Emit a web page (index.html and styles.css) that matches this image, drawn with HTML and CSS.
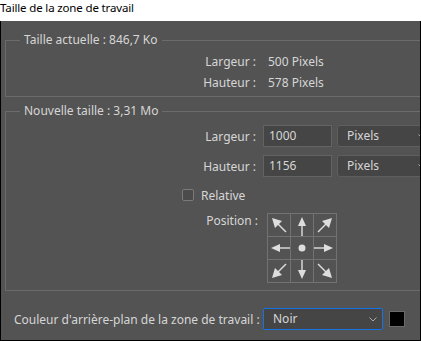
FILE: index.html
```html
<!DOCTYPE html>
<html lang="fr">
<head>
  <meta charset="UTF-8">
  <title>Taille de la zone de travail</title>
  <link rel="stylesheet" href="styles.css">
</head>
<body>
  <div class="window">
    <div class="titlebar">Taille de la zone de travail</div>
    <div class="frame">
      <fieldset class="group group-current">
        <legend>Taille actuelle : 846,7 Ko</legend>
        <div class="info">
          <span class="label">Largeur :</span><span class="value">500 Pixels</span>
          <span class="label">Hauteur :</span><span class="value">578 Pixels</span>
        </div>
      </fieldset>

      <fieldset class="group group-new">
        <legend>Nouvelle taille : 3,31 Mo</legend>
        <div class="form">
          <span class="label">Largeur :</span>
          <div class="fields">
            <div class="input">1000</div>
            <div class="select select-unit">Pixels
              <svg class="chevron" width="8" height="5" viewBox="0 0 8 5"><polyline points="0.5,0.5 4,4 7.5,0.5" fill="none" stroke="#a8a8a8" stroke-width="1"/></svg>
            </div>
          </div>

          <span class="label">Hauteur :</span>
          <div class="fields">
            <div class="input">1156</div>
            <div class="select select-unit">Pixels
              <svg class="chevron" width="8" height="5" viewBox="0 0 8 5"><polyline points="0.5,0.5 4,4 7.5,0.5" fill="none" stroke="#a8a8a8" stroke-width="1"/></svg>
            </div>
          </div>

          <div class="relative"><span class="checkbox"></span>Relative</div>

          <span class="label label-top">Position :</span>
          <div class="anchor">
            <svg width="71" height="71" viewBox="0 0 71 71">
              <g stroke="#727272" stroke-width="1" fill="none">
                <rect x="0.5" y="0.5" width="69" height="69"/>
                <line x1="23.5" y1="0" x2="23.5" y2="70"/>
                <line x1="46.5" y1="0" x2="46.5" y2="70"/>
                <line x1="0" y1="23.5" x2="70" y2="23.5"/>
                <line x1="0" y1="46.5" x2="70" y2="46.5"/>
              </g>
              <g fill="#dedede" stroke="#dedede" stroke-width="1.4">
                <line x1="35" y1="13" x2="35" y2="23"/>
                <polygon points="35,4 31,13 39,13" stroke="none"/>
                <line x1="35" y1="47" x2="35" y2="57"/>
                <polygon points="31,57 39,57 35,66" stroke="none"/>
                <line x1="13" y1="35" x2="23" y2="35"/>
                <polygon points="4,35 13,31 13,39" stroke="none"/>
                <line x1="47" y1="35" x2="57" y2="35"/>
                <polygon points="57,31 57,39 66,35" stroke="none"/>
                <circle cx="35" cy="35" r="3.5" stroke="none"/>
                <line x1="11" y1="11" x2="19" y2="19"/>
                <polygon points="5,5 15,8 8,15" stroke="none"/>
                <line x1="59" y1="11" x2="51" y2="19"/>
                <polygon points="65,5 55,8 62,15" stroke="none"/>
                <line x1="11" y1="59" x2="19" y2="51"/>
                <polygon points="5,65 8,55 15,62" stroke="none"/>
                <line x1="59" y1="59" x2="51" y2="51"/>
                <polygon points="65,65 62,55 55,62" stroke="none"/>
              </g>
            </svg>
          </div>
        </div>
      </fieldset>

      <div class="canvas-color">
        <span class="canvas-label">Couleur d'arrière-plan de la zone de travail :</span>
        <div class="select select-focus">Noir
          <svg class="chevron" width="8" height="5" viewBox="0 0 8 5"><polyline points="0.5,0.5 4,4 7.5,0.5" fill="none" stroke="#a8a8a8" stroke-width="1"/></svg>
        </div>
        <span class="swatch"></span>
      </div>
    </div>
  </div>
</body>
</html>
```

FILE: styles.css
```css
* {
  box-sizing: border-box;
}

body {
  margin: 0;
  font-family: "Noto Sans", "Open Sans", sans-serif;
  font-size: 12px;
}

.window {
  width: 421px;
  height: 341px;
  display: flex;
  flex-direction: column;
  overflow: hidden;
}

.titlebar {
  height: 21px;
  background: #ffffff;
  color: #000000;
  font-size: 11.5px;
  letter-spacing: -0.15px;
  line-height: 15px;
  white-space: nowrap;
}

.frame {
  flex: 1;
  background: #535353;
  color: #d6d6d6;
  border: 1px solid #000000;
  border-top: 0;
  overflow: hidden;
}

.group {
  width: 440px;
  margin: 11px 0 0 4px;
  padding: 0;
  border: 1px solid #6b6b6b;
  min-width: 0;
}

.group legend {
  margin-left: 14px;
  padding: 0 4px;
  line-height: 16px;
}

.group-new {
  margin-top: 6px;
}

.info {
  display: grid;
  grid-template-columns: 250px auto;
  column-gap: 12px;
  padding: 3px 0 3px;
  line-height: 21px;
}

.label {
  text-align: right;
}

.form {
  display: grid;
  grid-template-columns: 250px auto;
  column-gap: 7px;
  row-gap: 8px;
  padding: 6px 0 6px;
  align-items: center;
}

.fields {
  display: flex;
  gap: 5px;
}

.input {
  width: 69px;
  height: 22px;
  padding-left: 5px;
  line-height: 20px;
  background: #454545;
  border: 1px solid #636363;
}

.select {
  position: relative;
  width: 100px;
  height: 22px;
  padding-left: 9px;
  line-height: 20px;
  background: #454545;
  border: 1px solid #5e5e5e;
  border-radius: 3px;
}

.select-unit {
  flex-shrink: 0;
  width: 94px;
}

.select-unit .chevron {
  right: 4px;
}

.chevron {
  position: absolute;
  right: 5px;
  top: 8px;
}

.relative {
  grid-column: 1 / 3;
  display: flex;
  align-items: center;
  gap: 7px;
  height: 20px;
  padding-left: 176px;
}

.checkbox {
  width: 12px;
  height: 12px;
  border: 1px solid #7a7a7a;
  border-radius: 2px;
  background: #4b4b4b;
}

.label-top {
  align-self: start;
  line-height: 16px;
  margin-right: -2px;
}

.anchor {
  display: flex;
  margin-left: 4px;
}

.canvas-color {
  display: flex;
  align-items: center;
  margin-top: 17px;
  height: 22px;
}

.canvas-label {
  width: 262px;
  padding-left: 13px;
  white-space: nowrap;
}

.select-focus {
  width: 120px;
  border-color: #1473e6;
  border-radius: 2px;
}

.swatch {
  width: 16px;
  height: 16px;
  margin-left: 6px;
  background: #000000;
  border: 1px solid #6a6a6a;
}
```
